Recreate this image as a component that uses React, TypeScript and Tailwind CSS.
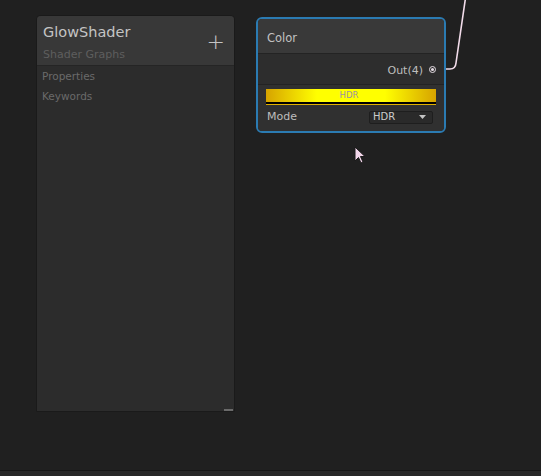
import React from "react";

export default function App() {
  const font = { fontFamily: '"DejaVu Sans", "Liberation Sans", sans-serif' };
  return (
    <div className="relative w-[541px] h-[476px] overflow-hidden bg-[#202020] flex flex-col" style={font}>
      <div className="flex-1 relative">
        {/* Blackboard */}
        <div className="absolute left-[36px] top-[15px] w-[199px] h-[397px] rounded-t-[4px] bg-[#2c2c2c] border border-[#1a1a1a] flex flex-col">
          <div className="h-[50px] bg-[#383838] rounded-t-[4px] border-b border-[#252525] flex items-start justify-between pl-[6px] pr-[9px]">
            <div className="flex flex-col pt-[7px]">
              <span className="text-[14.5px] leading-[18px] text-[#c4c4c4]">GlowShader</span>
              <span className="text-[11px] leading-[14px] mt-[7px] text-[#5e5e5e]">Shader Graphs</span>
            </div>
            <span className="text-[22px] leading-none mt-[15px] text-[#c4c4c4] font-light">+</span>
          </div>
          <div className="flex flex-col pl-[5px] pt-[3px] gap-[6px] text-[10.5px] leading-[14px] text-[#6a6a6a]">
            <span>Properties</span>
            <span>Keywords</span>
          </div>
          <div className="mt-auto self-end mr-[1px] mb-[0px] w-[9px] h-[2px] bg-[#6a6a6a]" />
        </div>

        {/* Edge */}
        <svg className="absolute left-0 top-0" width="541" height="470">
          <path d="M 436 69 L 450 69 Q 455.5 69 456 63 L 465.5 -2" fill="none" stroke="#f2dcea" strokeWidth="1.6" />
        </svg>

        {/* Color node */}
        <div className="absolute left-[256px] top-[17px] w-[190px] h-[116px] rounded-[6px] border-2 border-[#2b7bb2] bg-[#2e2e2e] flex flex-col overflow-hidden">
          <div className="h-[35px] bg-[#393939] border-b border-[#232323] flex items-center pl-[9px] pt-[5px] text-[11.5px] text-[#c2c2c2]">Color</div>
          <div className="h-[31px] bg-[#2d2d2d] border-b border-[#232323] flex items-center justify-end pr-[8px] gap-[6px]">
            <span className="text-[11px] text-[#bdbdbd] mt-[5px]">Out(4)</span>
            <span className="w-[7px] h-[7px] rounded-full border border-[#e6dde4] flex items-center justify-center">
              <span className="w-[3px] h-[3px] rounded-full bg-[#e6dde4]" />
            </span>
          </div>
          <div className="flex flex-col px-[8px] pt-[4px] bg-[#303030] flex-1">
            <div className="h-[13px] flex items-center justify-center pr-[4px] text-[8.5px] text-[#9b93a0]" style={{ background: "linear-gradient(90deg, #d6a300 0%, #ffff00 30%, #ffff00 70%, #d6a300 100%)" }}>
              HDR
            </div>
            <div className="h-[2px] bg-black" />
            <div className="h-[1px] bg-[#e0b000]" />
            <div className="flex items-center justify-between mt-[4px] pr-[3px]">
              <span className="text-[11px] text-[#bdbdbd] pl-[1px]">Mode</span>
              <div className="w-[64px] h-[13px] rounded-[2px] bg-[#2a2a2a] border border-[#1e1e1e] flex items-center justify-between pl-[3px] pr-[6px]">
                <span className="text-[10px] text-[#cccccc] leading-none">HDR</span>
                <svg width="7" height="4" viewBox="0 0 7 4"><path d="M0 0 L7 0 L3.5 4 Z" fill="#c4c4c4" /></svg>
              </div>
            </div>
          </div>
        </div>

        {/* Cursor */}
        <svg className="absolute left-[354px] top-[146px]" width="14" height="20" viewBox="0 0 14 20">
          <path d="M1 1 L1 15 L4.5 11.5 L7 17 L9 16 L6.5 10.5 L11 10.5 Z" fill="#f2d6ea" stroke="#1a1a1a" strokeWidth="1" />
        </svg>
      </div>
      <div className="h-[1px] bg-[#171717]" />
      <div className="h-[5px] bg-[#282828]" />
    </div>
  );
}
